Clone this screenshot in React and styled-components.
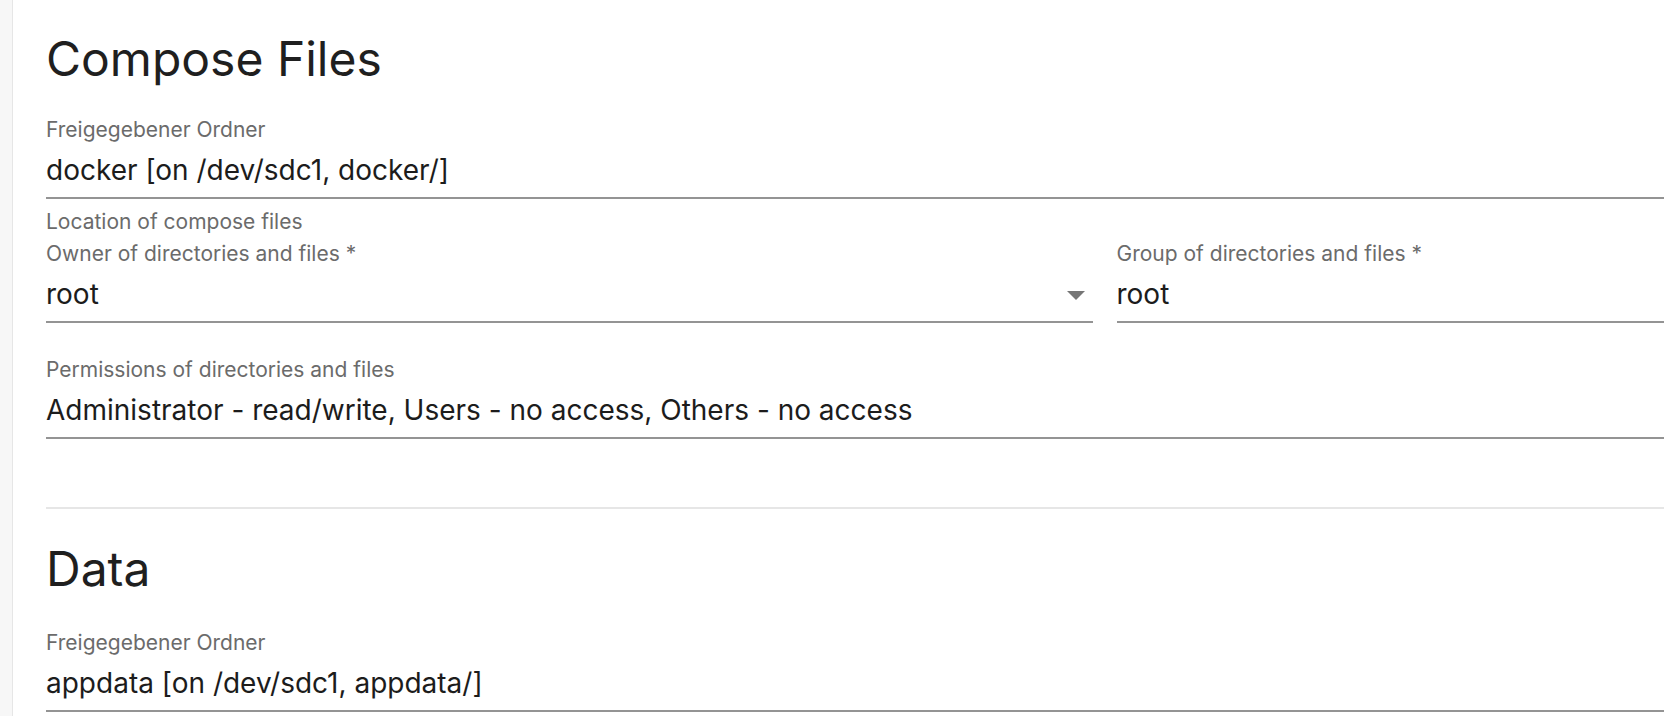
import React from "react";
import styled, { createGlobalStyle } from "styled-components";

const GlobalStyle = createGlobalStyle`
  html, body {
    margin: 0;
    padding: 0;
    background: #ffffff;
    overflow: hidden;
  }
  body {
    font-family: Inter, "Noto Sans", "Liberation Sans", sans-serif;
    -webkit-font-smoothing: antialiased;
  }
`;

const Page = styled.div`
  display: flex;
  min-height: 100vh;
  width: max-content;
`;

const Rail = styled.aside`
  width: 12px;
  flex-shrink: 0;
  background: #f7f7f7;
  border-right: 1px solid #e6e6e6;
`;

const Content = styled.main`
  width: 2117px;
  padding: 30.5px 0 0 33px;
  display: flex;
  flex-direction: column;
`;

const Section = styled.section`
  display: flex;
  flex-direction: column;
`;

const SectionTitle = styled.h2`
  margin: 0;
  font-size: 48px;
  line-height: 56px;
  font-weight: 400;
  color: #1f1f1f;
`;

const Fields = styled.div`
  display: flex;
  flex-direction: column;
  margin-top: ${(p) => p.$offset}px;
`;

const Row = styled.div`
  display: grid;
  grid-template-columns: ${(p) => (p.$split ? "1fr 1fr" : "1fr")};
  column-gap: 24px;
  margin-top: ${(p) => p.$space || 0}px;
`;

const Field = styled.div`
  display: flex;
  flex-direction: column;
  min-width: 0;
`;

const FieldLabel = styled.label`
  font-size: 21px;
  line-height: 26px;
  color: #6b6b6b;
  white-space: nowrap;
`;

const FieldValue = styled.div`
  display: flex;
  align-items: center;
  justify-content: space-between;
  margin-top: 10px;
  padding-bottom: 10px;
  border-bottom: 2px solid #949494;
  font-size: 28px;
  line-height: 34px;
  color: #1c1c1c;
  white-space: nowrap;
`;

const HelperText = styled.div`
  margin-top: 10.6px;
  font-size: 21px;
  line-height: 26px;
  color: #6b6b6b;
`;

const Caret = styled.svg`
  width: 18px;
  height: 9px;
  margin: 2px 8px 0 0;
  flex-shrink: 0;
  fill: #767676;
`;

const Divider = styled.hr`
  margin: 67.6px 0 32px;
  border: 0;
  height: 2px;
  background: #e6e6e6;
`;

function DropCaret() {
  return (
    <Caret viewBox="0 0 18 9" aria-hidden="true">
      <path d="M0 0 L18 0 L9 9 Z" />
    </Caret>
  );
}

function TextField({ label, value, select, helper }) {
  return (
    <Field>
      <FieldLabel>{label}</FieldLabel>
      <FieldValue>
        <span>{value}</span>
        {select && <DropCaret />}
      </FieldValue>
      {helper && <HelperText>{helper}</HelperText>}
    </Field>
  );
}

export default function App() {
  return (
    <>
      <GlobalStyle />
      <Page>
        <Rail />
        <Content>
          <Section>
            <SectionTitle>Compose Files</SectionTitle>
            <Fields $offset={30}>
              <Row>
                <TextField
                  label="Freigegebener Ordner"
                  value="docker [on /dev/sdc1, docker/]"
                  helper="Location of compose files"
                />
              </Row>
              <Row $split $space={6.4}>
                <TextField label="Owner of directories and files *" value="root" select />
                <TextField label="Group of directories and files *" value="root" />
              </Row>
              <Row $space={33.9}>
                <TextField
                  label="Permissions of directories and files"
                  value="Administrator - read/write, Users - no access, Others - no access"
                />
              </Row>
            </Fields>
          </Section>
          <Divider />
          <Section>
            <SectionTitle>Data</SectionTitle>
            <Fields $offset={32.7}>
              <Row>
                <TextField
                  label="Freigegebener Ordner"
                  value="appdata [on /dev/sdc1, appdata/]"
                />
              </Row>
            </Fields>
          </Section>
        </Content>
      </Page>
    </>
  );
}
